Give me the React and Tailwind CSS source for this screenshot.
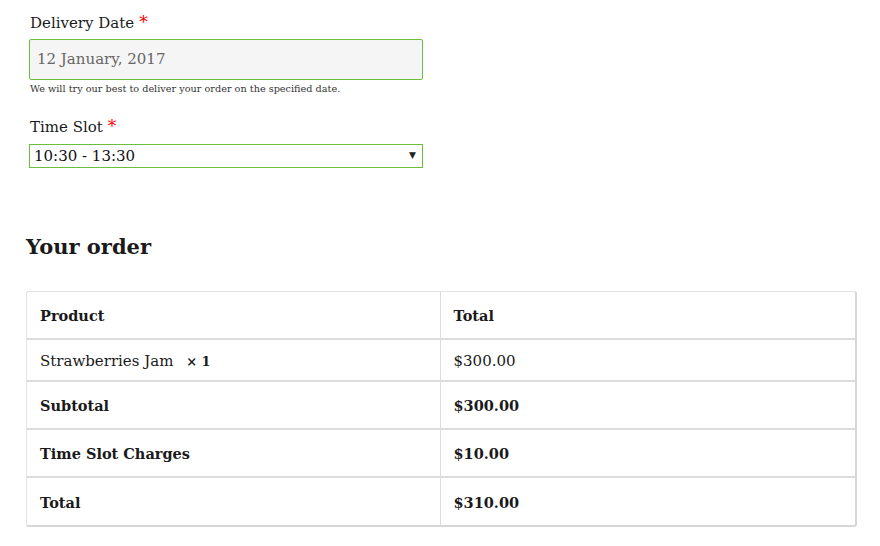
const SERIF = "font-['DejaVu_Serif','Liberation_Serif',serif]";

const rows = [
  { label: "Subtotal", value: "$300.00" },
  { label: "Time Slot Charges", value: "$10.00" },
  { label: "Total", value: "$310.00" },
];

function Required() {
  return <span className="text-[#ff0000] ml-[5px] text-[17px] leading-none">*</span>;
}

export default function App() {
  return (
    <div className={`${SERIF} bg-white w-[880px] h-[546px] text-[#1a1a1a] overflow-hidden`}>
      <div className="pl-[29px] pt-[11px] w-[423px]">
        <label className="block text-[15px] leading-6 pl-px mb-[4px]">
          Delivery Date<Required />
        </label>
        <div className="h-[41px] border border-[#6cbf3a] rounded-[2px] bg-[#f5f5f5] flex items-center pl-[7px] text-[15px] text-[#666666]">
          12 January, 2017
        </div>
        <p className="text-[9.7px] leading-4 mt-[1px] pl-px text-[#333333]">
          We will try our best to deliver your order on the specified date.
        </p>

        <label className="block text-[15px] leading-6 pl-px mt-[18px] mb-[5px]">
          Time Slot<Required />
        </label>
        <div className="h-[24px] border border-[#6cbf3a] bg-white flex items-center justify-between pl-[4px] pr-[6px] text-[15px] text-[#111111]">
          <span>10:30 - 13:30</span>
          <span className="text-[9px] text-[#222222]">▼</span>
        </div>
      </div>

      <h2 className="ml-[26px] mt-[63px] text-[21px] font-bold leading-8 text-[#1a1a1a]">Your order</h2>

      <div className="ml-[26px] mt-[28px] w-[831px] border border-[#e3e3e3] border-r-2 border-r-[#d6d6d6] border-b-2 border-b-[#d6d6d6] rounded-[3px] overflow-hidden">
        <table className="w-full border-collapse text-[15px]">
          <tbody>
            <tr className="h-[47px]">
              <th className="text-left font-bold text-[14.5px] pl-[13px] pt-[2px] w-[413px] border-r border-[#dcdcdc]">Product</th>
              <th className="text-left font-bold text-[14.5px] pl-[13px] pt-[2px]">Total</th>
            </tr>
            <tr className="h-[42px] border-t-2 border-[#dcdcdc]">
              <td className="pl-[13px] pt-[2px] border-r border-[#dcdcdc]">
                Strawberries Jam <span className="font-bold text-[13px] ml-2">× 1</span>
              </td>
              <td className="pl-[13px] pt-[2px]">$300.00</td>
            </tr>
            {rows.map((r) => (
              <tr key={r.label} className="h-[48px] border-t-2 border-[#dcdcdc]">
                <th className="text-left font-bold text-[14.5px] pl-[13px] pt-[2px] border-r border-[#dcdcdc]">{r.label}</th>
                <td className="font-bold text-[14.5px] pl-[13px] pt-[2px]">{r.value}</td>
              </tr>
            ))}
          </tbody>
        </table>
      </div>
    </div>
  );
}
